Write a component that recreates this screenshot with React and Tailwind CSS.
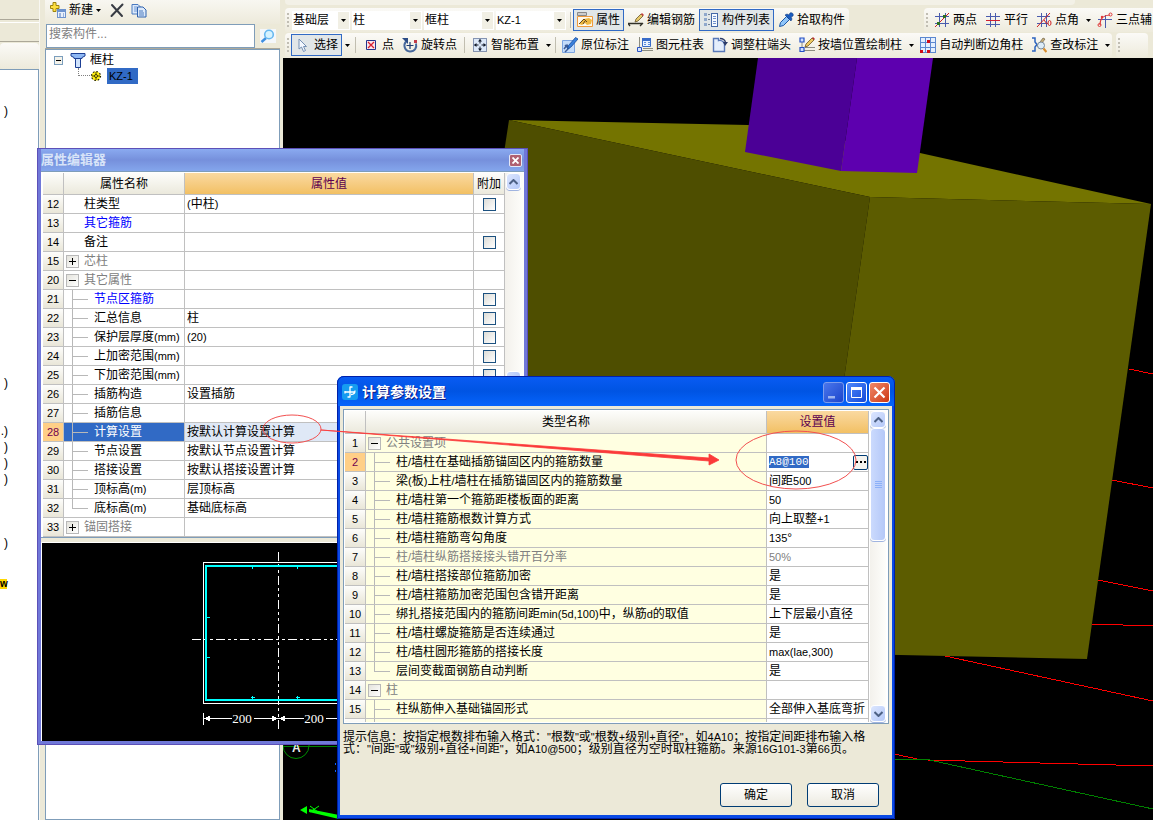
import React from "react";
import clsx from "clsx";

/* Latin runs are set one step smaller so they sit evenly beside the Chinese glyphs. */
function T({ children }) {
  return String(children)
    .split(/([\x20-\x7e]+)/)
    .filter(Boolean)
    .map((part, i) =>
      /^[\x20-\x7e]/.test(part) ? (
        <span key={i} className="text-[11px]">{part}</span>
      ) : (
        <React.Fragment key={i}>{part}</React.Fragment>
      )
    );
}

/* ---------- icons ---------- */

function Svg({ children, crisp }) {
  return (
    <svg viewBox="0 0 16 16" className="size-4 shrink-0" fill="none" aria-hidden="true" shapeRendering={crisp ? "crispEdges" : "auto"}>
      {children}
    </svg>
  );
}

const Icons = {
  create: (
    <Svg>
      <path d="M3 .5h3v3h3v3H6v3H3v-3H.5v-3H3z" fill="#ffe040" stroke="#9c8410" />
      <rect x="7.500" y="7.500" width="8" height="8" fill="#e8f0fc" stroke="#6d93cf" />
      <path d="M7.500 8h8v2h-8z" fill="#6d93cf" />
      <path d="M9 12h2m2 0h1M9 14h2m2 0h1" stroke="#4a74b8" />
    </Svg>
  ),
  remove: (
    <Svg>
      <path d="M3 3l10 11M13.500 2.500L2.500 14" stroke="#383c44" strokeWidth="2" strokeLinecap="round" />
    </Svg>
  ),
  copy: (
    <Svg>
      <path d="M1 2.500h6l3 3V12H1z" fill="#dce9fa" stroke="#4a7abf" />
      <path d="M3 5h3M3 7h4M3 9h4" stroke="#6d98d6" />
      <path d="M6.500 5h5.500l3 3v7H6.500z" fill="#dce9fa" stroke="#2f62ae" />
      <path d="M8 9h4M8 11h5M8 13h5" stroke="#4a7abf" />
    </Svg>
  ),
  search: (
    <Svg>
      <rect width="16" height="14" y="1" fill="#f4f7fb" />
      <path d="M6 10l-4.500 4" stroke="#3f8fe0" strokeWidth="2.400" />
      <circle cx="9" cy="6.500" r="4.300" fill="#d6f2ff" stroke="#68b8f0" strokeWidth="1.600" />
    </Svg>
  ),
  column: (
    <Svg>
      <path d="M1 1.500h14v2.500l-3 1.500v1H4v-1L1 4z" fill="#8fb8f4" stroke="#1c3f94" />
      <path d="M5.500 6.500h5v9h-5z" fill="#cfe2fc" stroke="#1c3f94" />
    </Svg>
  ),
  gear: (
    <svg viewBox="0 0 12 12" className="size-3 shrink-0" aria-hidden="true">
      <circle cx="6" cy="6" r="4.500" fill="#ffee10" stroke="#201c00" strokeWidth="1.200" strokeDasharray="1.600 1.900" />
      <path d="M6 2v8M2 6h8" stroke="#201c00" strokeWidth=".8" />
      <circle cx="6" cy="6" r="1.500" fill="#ffee10" stroke="#201c00" strokeWidth=".8" />
    </svg>
  ),
  property: (
    <Svg>
      <path d="M.5.500h9v3h-9z" fill="#ccc" stroke="#888" />
      <path d="M.5 4.500h15v10H.5z" fill="#fff8ea" stroke="#f09a3c" />
      <path d="M2 12c2-1 2-4 5-5l5-1 3 2-1 4-4 1-2-2-3 2z" fill="#f0b840" />
      <path d="M2 12l3-3 2-2 3 3M6 12l2-3" stroke="#604820" />
    </Svg>
  ),
  editRebar: (
    <Svg>
      <path d="M0 11.500h14M2 14l-2-2.500M12 14l3-3" stroke="#303028" strokeWidth="1.300" />
      <path d="M7 10l1-3 5-5 2 2-5 5z" fill="#e8c868" stroke="#66562c" strokeWidth=".8" />
      <path d="M13 2l1-1 2 2-1 1z" fill="#c83c3c" />
    </Svg>
  ),
  list: (
    <Svg crisp>
      <path d="M1 1h3v3H1zM1 6h3v3H1zM1 11h3v3H1z" fill="#90a8cc" />
      <path d="M5 2.500h2M5 7.500h2M5 12.500h2" stroke="#708098" />
      <path d="M8.500 1.500h6v13h-6z" fill="#f6faff" stroke="#4468a8" />
      <path d="M10 4.500h3M10 6.500h3M10 9.500h3M10 11.500h3" stroke="#6f8fcc" />
    </Svg>
  ),
  dropper: (
    <Svg>
      <path d="M1.500 14.500l1-4 6-6 3 3-6 6z" fill="#8fc4f8" stroke="#1c58a8" />
      <path d="M7 3l6 6 1-2-1-2 2-1c1-2-1-4-3-3l-1 2-2-1z" fill="#1a5cc0" stroke="#103a80" strokeWidth=".6" />
    </Svg>
  ),
  cursor: (
    <Svg>
      <path d="M4 2v10l2.500-2 2 4.500 2-1-2-4h3z" fill="#f4f8ff" stroke="#7590b4" strokeWidth="1" />
    </Svg>
  ),
  point: (
    <Svg>
      <path d="M3.500 3.500h9v9h-9z" fill="#fbe6ea" stroke="#24348c" />
      <path d="M5 5l6 6M11 5l-6 6" stroke="#d82030" strokeWidth="1.300" />
    </Svg>
  ),
  rotate: (
    <Svg>
      <path d="M4 4.500C1 8 2.500 14 8 14.500c5 0 7-4 6-8" stroke="#47689c" strokeWidth="2" />
      <path d="M0 1h6v6z" fill="#2c4c86" />
      <path d="M8 5v7M4.500 8.500h7" stroke="#203c70" strokeWidth="1.200" />
      <path d="M12 3h3v3h-3z" fill="#c03c48" />
    </Svg>
  ),
  smart: (
    <Svg>
      <path d="M1.500 1.500h13v13h-13z" fill="#dce8f8" stroke="#203870" strokeDasharray="1 1" />
      <path d="M8 2.500v4M8 9.500v4M2.500 8h4M9.500 8h4" stroke="#101828" />
      <path d="M8 2l2 2.500H6zM8 14l2-2.500H6zM2 8l2.500-2v4zM14 8l-2.500-2v4z" fill="#101828" />
    </Svg>
  ),
  annotate: (
    <Svg>
      <path d="M.5 3.500h12v12H.5z" fill="#c4dcfa" stroke="#7ca4e0" />
      <path d="M3 8l4 4M2 12l3-4 2 3-4 4" stroke="#3c5c98" strokeWidth="1.500" />
      <path d="M5.500 12l1-3.500 7-8L16 2l-7 8z" fill="#3a80dc" stroke="#164c9c" strokeWidth=".8" />
    </Svg>
  ),
  sheet: (
    <Svg>
      <path d="M2.500 0v11M5 13.500h11M6 11.500h10" stroke="#8c8c80" />
      <path d="M.5 10.500h4v4h-4z" fill="#d4e4fc" stroke="#2c54c4" />
      <path d="M5.500 1.500h8v8h-8z" fill="#e8f2ff" stroke="#3a6cc8" />
      <path d="M5 1h9v3H5z" fill="#3a6cc8" />
      <path d="M7 5.500h2m2 0h2M7 7.500h2m2 0h2" stroke="#5c8cdc" />
    </Svg>
  ),
  adjust: (
    <Svg>
      <path d="M1.500 1.500h5v2a5 5 0 016 6v5h-11z" fill="#e4eefc" stroke="#5878b8" strokeWidth="1.400" />
      <path d="M8 1.500c3 0 5 1.500 5.500 4" stroke="#2c3c68" strokeWidth="1.300" />
      <path d="M11 5h5l-3 4z" fill="#2c3c68" />
    </Svg>
  ),
  wallColumn: (
    <Svg>
      <path d="M3 2v12M5 13.500h11M6 10.500h10" stroke="#8c8c80" />
      <path d="M1 1h4v4H1zM1 10.500h4v4H1z" fill="#cfe0ff" stroke="#2450c4" strokeWidth="1.200" />
      <path d="M6 10l1-3 6-6 2 2-6 6z" fill="#ecc860" stroke="#6c5424" strokeWidth=".8" />
      <path d="M13 1l1-1 2 2-1 1z" fill="#b82c2c" />
    </Svg>
  ),
  autoCorner: (
    <Svg crisp>
      <path d="M0 0h16v16H0z" fill="#5c88d0" />
      <path d="M1 1h4v4H1zM6 1h4v4H6zM11 1h4v4h-4zM1 6h4v4H1zM6 6h4v4H6zM11 6h4v4h-4zM1 11h4v4H1zM6 11h4v4H6zM11 11h4v4h-4z" fill="#e4effe" />
      <path d="M7 3h3v3H7zM0 13h3v3H0zM7 13h3v3H7z" fill="#d00c18" />
    </Svg>
  ),
  review: (
    <Svg>
      <path d="M1 1h3v4l2 2.500L4 10v4H1" stroke="#2c64c0" strokeWidth="1.500" />
      <path d="M6 9l6-8 2 1-6 8z" fill="#c8b078" stroke="#605038" strokeWidth=".6" />
      <circle cx="10" cy="8.500" r="3.500" fill="#dcecf8" stroke="#788898" />
      <path d="M12.500 11.500l3 3.500" stroke="#d88c2c" strokeWidth="2.200" />
    </Svg>
  ),
  twoPoint: (
    <Svg>
      <path d="M5.500 1v14M11.500 1v14M1 4.500h14M1 11.500h14" stroke="#4a5cae" />
      <path d="M1 15L15 1" stroke="#d02020" />
      <path d="M9 3h3v3H9zM3 10h3v3H3z" fill="#2c7020" />
    </Svg>
  ),
  parallel: (
    <Svg>
      <path d="M5.500 1v14M10.500 1v14M1 4.500h14M1 12.500h14" stroke="#4a5cae" />
      <path d="M1 8.500h14" stroke="#d02030" />
    </Svg>
  ),
  pointAngle: (
    <Svg>
      <path d="M5.500 1v14M10.500 1v14M1 4.500h13M1 11.500h11" stroke="#4a5cae" />
      <path d="M1 15L14 1M8 8l3 4" stroke="#d02020" />
      <ellipse cx="13.500" cy="11" rx="1.500" ry="2.500" stroke="#d02020" />
    </Svg>
  ),
  threePoint: (
    <Svg>
      <path d="M8.500 3v13M1 7.500h14" stroke="#4a5cae" />
      <path d="M3 13C3 6 7 3 13 3" stroke="#e03838" strokeWidth="1.200" />
      <circle cx="2.500" cy="13" r="1.500" stroke="#e03838" />
      <circle cx="13.500" cy="2.500" r="1.500" stroke="#e03838" />
      <circle cx="5" cy="5" r="1.200" fill="#e03838" />
    </Svg>
  ),
};

function Caret() {
  return (
    <svg viewBox="0 0 5 3" className="h-[3px] w-[5px]" aria-hidden="true">
      <path d="M0 0h5L2.500 3z" fill="#000" />
    </svg>
  );
}

/* ---------- toolbars ---------- */

function Grip() {
  return (
    <span className="mx-0.5 flex flex-col gap-[2px]">
      {[0, 1, 2, 3].map((i) => (
        <span key={i} className="size-[2px] bg-[#c1beb3]" />
      ))}
    </span>
  );
}

function Sep({ wide }) {
  return <span className={clsx("h-4 w-px bg-[#c1beb0]", wide ? "mx-[3px]" : "mx-0.5")} />;
}

function Tool({ icon, label, active }) {
  return (
    <button
      type="button"
      className={clsx(
        "flex h-[22px] shrink-0 items-center gap-[3px] whitespace-nowrap border px-[3px]",
        active ? "border-[#316ac5] bg-[#e1e6e8]" : "border-transparent"
      )}
    >
      {Icons[icon]}
      {label}
    </button>
  );
}

function Drop({ label }) {
  return (
    <button type="button" aria-label={label} className="flex h-5 w-[10px] shrink-0 items-center justify-center">
      <Caret />
    </button>
  );
}

function Combo({ label, value, wide }) {
  return (
    <span className={clsx("relative mr-[2px] flex h-[19px] shrink-0 bg-white", wide ? "w-[70px]" : "w-[58px]")}>
      <select
        aria-label={label}
        className={clsx("w-full appearance-none bg-transparent pl-px leading-4 outline-none", value === "KZ-1" && "text-[11px]")}
      >
        <option>{value}</option>
      </select>
      <span className="pointer-events-none absolute inset-y-px right-px flex w-[11px] items-center justify-center bg-[#f1efe4]">
        <Caret />
      </span>
    </span>
  );
}

function Bar({ children, className }) {
  return (
    <div className={clsx("flex h-[25px] shrink-0 items-center rounded-sm bg-linear-to-b from-[#fbfaf7] to-[#edeadb]", className)}>
      {children}
    </div>
  );
}

function Toolbars() {
  return (
    <div className="flex shrink-0 flex-col bg-[#ece9d8] pl-0.5">
      <div className="h-[5px] w-[790px] max-w-full rounded-b-sm bg-[#f3f1e7]" />
      <div className="flex h-[27px] items-center overflow-hidden pt-[3px]">
        <Bar>
          <Grip />
          <span className="ml-px flex">
            <Combo label="楼层" value="基础层" />
            <Combo label="构件类别" value="柱" wide />
            <Combo label="构件类型" value="框柱" wide />
            <Combo label="构件名称" value="KZ-1" wide />
          </span>
          <Sep />
          <Tool icon="property" label="属性" active />
          <Tool icon="editRebar" label="编辑钢筋" />
          <Tool icon="list" label="构件列表" active />
          <Tool icon="dropper" label="拾取构件" />
        </Bar>
        <Bar className="ml-[75px]">
          <Grip />
          <Tool icon="twoPoint" label="两点" />
          <Tool icon="parallel" label="平行" />
          <Tool icon="pointAngle" label="点角" />
          <Drop label="点角选项" />
          <Tool icon="threePoint" label="三点辅" />
        </Bar>
      </div>
      <div className="flex h-[26px] items-center overflow-hidden">
        <Bar>
          <Grip />
          <Tool icon="cursor" label="选择" active />
          <Drop label="选择选项" />
          <Sep wide />
          <Tool icon="point" label="点" />
          <Tool icon="rotate" label="旋转点" />
          <Sep wide />
          <Tool icon="smart" label="智能布置" />
          <Drop label="智能布置选项" />
          <Sep />
          <Tool icon="annotate" label="原位标注" />
          <Tool icon="sheet" label="图元柱表" />
          <Tool icon="adjust" label="调整柱端头" />
          <Tool icon="wallColumn" label="按墙位置绘制柱" />
          <Drop label="绘制柱选项" />
          <Tool icon="autoCorner" label="自动判断边角柱" />
          <Tool icon="review" label="查改标注" />
          <Drop label="查改标注选项" />
        </Bar>
        <Bar className="ml-1 w-8">
          <Grip />
        </Bar>
      </div>
    </div>
  );
}

/* ---------- background panes ---------- */

const editorLines = {
  0: ")", 17: ")", 20: ".)", 21: ")", 22: ")", 23: ")", 27: ")",
};

function EditorStrip() {
  return (
    <aside className="flex w-10 shrink-0 flex-col border-r border-[#f8f7f2] bg-[#ece9d8]">
      <div className="h-5 border-b border-[#aca899]" />
      <div className="mt-0.5 h-5 border-b border-t border-b-[#aca899] border-t-white" />
      <div className="mt-px h-[26px] rounded-sm bg-linear-to-b from-[#fbfaf7] to-[#edeadb]" />
      <div className="flex flex-1 flex-col overflow-hidden border-r border-t border-[#7f9db9] bg-white pt-[33px]">
        {Array.from({ length: 28 }, (_, i) => (
          <p key={i} className="h-4 w-2 text-right leading-4">{editorLines[i]}</p>
        ))}
        <p className="mt-7 w-[7px] bg-[#ffd800] text-[10px] font-bold leading-[10px]">w</p>
      </div>
    </aside>
  );
}

function ComponentPane() {
  return (
    <aside className="flex w-[243px] shrink-0 flex-col bg-[#ece9d8] pl-[5px] pr-[3px]">
      <div className="flex h-6 items-center bg-linear-to-b from-[#f8f7f1] to-[#edeadb] pb-1 pl-[5px]">
        <button type="button" className="flex items-center gap-[3px]">
          {Icons.create}
          新建
        </button>
        <Drop label="新建选项" />
        <button type="button" aria-label="删除" className="ml-[6px]">{Icons.remove}</button>
        <button type="button" aria-label="复制" className="ml-[6px]">{Icons.copy}</button>
      </div>
      <div className="flex h-[25px] items-center border-b border-[#aca899] pl-px">
        <input
          aria-label="搜索构件"
          placeholder="搜索构件..."
          className="h-6 min-w-0 flex-1 border border-[#7f9db9] bg-white px-0.5 pb-1 outline-none placeholder:text-[#808080]"
        />
        <button type="button" aria-label="搜索" className="pl-[5px] pr-1">{Icons.search}</button>
      </div>
      <div className="flex-1 border border-[#7f9db9] bg-white pl-2 pt-0.5">
        <div className="flex h-4 items-center">
          <button type="button" aria-label="折叠" className="flex size-[9px] items-center justify-center border border-[#7b9ebd] bg-[#f4f2ea]">
            <span className="h-px w-[5px] bg-black" />
          </button>
          <span className="ml-[7px] mr-1 flex">{Icons.column}</span>
          框柱
        </div>
        <div className="flex h-4 items-center">
          <span className="ml-6 h-2 w-3 self-start border-b border-l border-dotted border-[#808080]" />
          {Icons.gear}
          <span className="ml-[5px] bg-[#316ac5] px-0.5 leading-4"><T>KZ-1</T>&nbsp;</span>
        </div>
      </div>
    </aside>
  );
}

function Model() {
  return (
    <svg viewBox="283 58 870 762" preserveAspectRatio="xMinYMin slice" className="min-h-0 w-full flex-1 bg-black" role="img" aria-label="三维模型">
      <g stroke="#ff0000" fill="none" shapeRendering="crispEdges">
        <path d="M1129 369l24 5M1112 480l41 8M1098 580l55 11M1092 624l61 2M945 656l208 45M880 751l42 9M927 760l226 6" />
      </g>
      <path d="M283 746.500h60M880 759h45l228 50" stroke="#008000" fill="none" shapeRendering="crispEdges" />
      <path d="M509 120l239 5 172 28 231 51-281-7z" fill="#747400" />
      <path d="M509 120l361 77-65 456-365-80z" fill="#4e4e00" />
      <path d="M870 197l281 7-64 455-282-6z" fill="#5c5c00" />
      <path d="M758 58h99l-16 113-96-19z" fill="#4b0096" />
      <path d="M857 58h76l-16 115-76-2z" fill="#5d00af" />
      <circle cx="296" cy="745.500" r="13" fill="none" stroke="#009000" />
      <text x="292" y="752" fontSize="12" fontWeight="bold" fill="#e8e8e8">A</text>
      <path d="M300 810l7-4v8zM309 809l30 6v4l-30-7z" fill="#00ff00" />
      <path d="M310 806l8 6m1-6l-9 6" stroke="#00ff00" />
      <path d="M335.500 763v2m0 5v2" stroke="#1060ff" />
    </svg>
  );
}

/* ---------- grid parts ---------- */

const cell = "h-[19px] overflow-hidden whitespace-nowrap border-b border-r border-[#c0c0c0] p-0";
const headGrey = "bg-linear-to-b from-[#fdfdfb] to-[#ebe9dc] font-normal";
const headGold = "bg-linear-to-b from-[#fad9a0] to-[#f2c063] font-normal text-[#5c0050]";

function Guide({ last }) {
  return (
    <span className="ml-2 mr-[6px] flex w-4 shrink-0 flex-col self-stretch">
      <span className="h-[10px] border-b border-l border-[#b8b8b8]" />
      {!last && <span className="flex-1 border-l border-[#b8b8b8]" />}
    </span>
  );
}

function Toggle({ open }) {
  return (
    <button
      type="button"
      aria-label={open ? "折叠" : "展开"}
      className="relative ml-0.5 mr-[5px] flex size-[13px] shrink-0 items-center justify-center border border-[#b8b8b8] bg-linear-to-br from-[#e4e3dc] to-white"
    >
      <span className="h-px w-[7px] bg-black" />
      {!open && <span className="absolute h-[7px] w-px bg-black" />}
    </button>
  );
}

function NameCell({ kind, text, tone }) {
  return (
    <div className={clsx("flex h-[18px] items-center leading-[18px]", tone)}>
      {(kind === "open" || kind === "closed") && <Toggle open={kind === "open"} />}
      {(kind === "child" || kind === "last") && <Guide last={kind === "last"} />}
      {kind === "plain" && <span className="w-5 shrink-0" />}
      <span><T>{text}</T></span>
    </div>
  );
}

function NumCell({ n, active }) {
  return (
    <th scope="row" className={clsx(cell, "text-center font-normal leading-[18px]", active ? "bg-[#ffcf87] text-[#700050]" : "bg-linear-to-b from-[#fdfdfb] to-[#e9e6d8]")}>
      <T>{n}</T>
    </th>
  );
}

function ScrollButton({ label, down }) {
  return (
    <button type="button" aria-label={label} className="flex h-[17px] w-full shrink-0 items-center justify-center rounded-sm border border-white bg-linear-to-br from-[#dce6fe] to-[#b4c8f8] shadow-[0_1px_0_#a0b4e0]">
      <svg viewBox="0 0 9 6" className="h-[6px] w-[9px]" aria-hidden="true">
        <path d={down ? "M.5 1l4 4 4-4" : "M.5 5l4-4 4 4"} fill="none" stroke="#4d6185" strokeWidth="2" />
      </svg>
    </button>
  );
}

/* ---------- property editor ---------- */

const properties = [
  { n: 12, kind: "plain", name: "柱类型", value: "(中柱)", box: true },
  { n: 13, kind: "plain", name: "其它箍筋", tone: "text-[#0000ff]" },
  { n: 14, kind: "plain", name: "备注", box: true },
  { n: 15, kind: "closed", name: "芯柱", tone: "text-[#808080]" },
  { n: 20, kind: "open", name: "其它属性", tone: "text-[#808080]" },
  { n: 21, kind: "child", name: "节点区箍筋", tone: "text-[#0000ff]", box: true },
  { n: 22, kind: "child", name: "汇总信息", value: "柱", box: true },
  { n: 23, kind: "child", name: "保护层厚度(mm)", value: "(20)", box: true },
  { n: 24, kind: "child", name: "上加密范围(mm)", box: true },
  { n: 25, kind: "child", name: "下加密范围(mm)", box: true },
  { n: 26, kind: "child", name: "插筋构造", value: "设置插筋" },
  { n: 27, kind: "child", name: "插筋信息" },
  { n: 28, kind: "child", name: "计算设置", value: "按默认计算设置计算", active: true },
  { n: 29, kind: "child", name: "节点设置", value: "按默认节点设置计算" },
  { n: 30, kind: "child", name: "搭接设置", value: "按默认搭接设置计算" },
  { n: 31, kind: "child", name: "顶标高(m)", value: "层顶标高" },
  { n: 32, kind: "last", name: "底标高(m)", value: "基础底标高" },
  { n: 33, kind: "closed", name: "锚固搭接", tone: "text-[#808080]" },
];

function SectionDrawing() {
  return (
    <svg viewBox="42 543 482 198" className="block w-full bg-black" role="img" aria-label="柱截面" shapeRendering="crispEdges">
      <g fill="none" stroke="#fff">
        <path d="M203.500 562.500h149v141h-149z" />
        <path d="M278.500 552v178M192 639.500h172" strokeDasharray="9 3 3 3 3 3" />
        <path d="M203.500 713v12M203 718.500h29M254 718.500h50M326 718.500h28" />
      </g>
      <path d="M206 566h145v134H206z" fill="none" stroke="#00ffff" strokeWidth="2" />
      <path d="M252.500 567v2m45-2v2M207 617.500h3m-3 40h3M252.500 696v3m-2-1.500h4m43-1.500v3m-2-1.500h4" stroke="#00ffff" />
      <path d="M204 718.500l6-3v6zM278 718.500l-6-3v6zM279 718.500l6-3v6z" fill="#fff" />
      <g fill="#fff" fontSize="13" textAnchor="middle" className="font-['Liberation_Serif',serif]">
        <text x="242" y="723">200</text>
        <text x="314" y="723">200</text>
      </g>
    </svg>
  );
}

function PropertyEditor() {
  return (
    <section aria-label="属性编辑器" className="absolute left-[37px] top-[148px] w-[491px] border-4 border-t border-[#7078d8] bg-[#ece9d8] outline-1 -outline-offset-1 outline-[#5c50b8]">
      <header className="flex h-[22px] items-center justify-between bg-linear-to-b from-[#8aaaf0] via-[#7690dc] to-[#84a6ec] pr-0.5">
        <h2 className="text-[13px] font-bold leading-5 text-[#d8e4f8]">属性编辑器</h2>
        <button type="button" aria-label="关闭" className="flex size-[13px] items-center justify-center rounded-xs border border-[#e4e8f8] bg-[#b06070]">
          <svg viewBox="0 0 7 7" className="size-[7px]" aria-hidden="true">
            <path d="M.5.500l6 6m0-6l-6 6" stroke="#fff" strokeWidth="1.800" />
          </svg>
        </button>
      </header>
      <div className="flex border-y border-[#7f9db9] bg-white pl-0.5 pt-px">
        <table className="w-0 flex-1 table-fixed border-separate border-spacing-0">
          <colgroup>
            <col className="w-[21px]" />
            <col className="w-[121px]" />
            <col />
            <col className="w-[31px]" />
          </colgroup>
          <thead>
            <tr className="h-[22px]">
              <th className={clsx(cell, headGrey)} aria-label="序号" />
              <th className={clsx(cell, headGrey)}>属性名称</th>
              <th className={clsx(cell, headGold)}>属性值</th>
              <th className={clsx(cell, headGrey)}>附加</th>
            </tr>
          </thead>
          <tbody>
            {properties.map((p) => (
              <tr key={p.n}>
                <NumCell n={p.n} active={p.active} />
                <td className={clsx(cell, p.active && "bg-[#316ac5] text-white")}>
                  <NameCell kind={p.kind} text={p.name} tone={p.tone} />
                </td>
                <td className={clsx(cell, "pl-0.5 leading-[18px]", p.active && "bg-[#dfe8f6]")}>
                  {p.value && <T>{p.value}</T>}
                </td>
                <td className={cell}>
                  {p.box && (
                    <input type="checkbox" aria-label={p.name + " 附加"} className="mx-auto block size-[13px] appearance-none border border-[#1c5180] bg-linear-to-br from-[#dcdcd7] to-white" />
                  )}
                </td>
              </tr>
            ))}
          </tbody>
        </table>
        <div className="flex w-[19px] flex-col bg-linear-to-r from-[#f3f1ec] to-[#fefefb] px-px pr-[3px]">
          <ScrollButton label="向上滚动" />
          <span className="h-[181px]" />
          <span className="h-20 rounded-sm border border-white bg-linear-to-r from-[#cbdafd] to-[#b4c8f8]" />
        </div>
      </div>
      <div className="pt-1">
        <div className="border-l border-t border-white">
          <SectionDrawing />
        </div>
      </div>
    </section>
  );
}

/* ---------- calculation settings dialog ---------- */

const settings = [
  { n: 1, kind: "open", name: "公共设置项", tone: "text-[#808080]" },
  { n: 2, kind: "child", name: "柱/墙柱在基础插筋锚固区内的箍筋数量", value: "A8@100", active: true },
  { n: 3, kind: "child", name: "梁(板)上柱/墙柱在插筋锚固区内的箍筋数量", value: "间距500" },
  { n: 4, kind: "child", name: "柱/墙柱第一个箍筋距楼板面的距离", value: "50" },
  { n: 5, kind: "child", name: "柱/墙柱箍筋根数计算方式", value: "向上取整+1" },
  { n: 6, kind: "child", name: "柱/墙柱箍筋弯勾角度", value: "135°" },
  { n: 7, kind: "child", name: "柱/墙柱纵筋搭接接头错开百分率", value: "50%", tone: "text-[#808080]" },
  { n: 8, kind: "child", name: "柱/墙柱搭接部位箍筋加密", value: "是" },
  { n: 9, kind: "child", name: "柱/墙柱箍筋加密范围包含错开距离", value: "是" },
  { n: 10, kind: "child", name: "绑扎搭接范围内的箍筋间距min(5d,100)中，纵筋d的取值", value: "上下层最小直径" },
  { n: 11, kind: "child", name: "柱/墙柱螺旋箍筋是否连续通过", value: "是" },
  { n: 12, kind: "child", name: "柱/墙柱圆形箍筋的搭接长度", value: "max(lae,300)" },
  { n: 13, kind: "last", name: "层间变截面钢筋自动判断", value: "是" },
  { n: 14, kind: "open", name: "柱", tone: "text-[#808080]" },
  { n: 15, kind: "child", name: "柱纵筋伸入基础锚固形式", value: "全部伸入基底弯折" },
  { n: "", kind: "child", name: "" },
];

function TitleButton({ label, className, children }) {
  return (
    <button type="button" aria-label={label} className={clsx("size-[21px] rounded-[3px] border", className)}>
      <svg viewBox="0 0 19 19" className="size-full" fill="none" aria-hidden="true">{children}</svg>
    </button>
  );
}

function SettingsDialog() {
  const push = "h-6 w-[72px] rounded-[3px] border border-[#003c74] bg-linear-to-b from-white to-[#eceae0]";
  return (
    <section role="dialog" aria-label="计算参数设置" className="absolute left-[337px] top-[376px] w-[558px] overflow-hidden rounded-t-[7px] bg-[#0a4ae4] px-[3px] pb-1 outline-1 -outline-offset-1 outline-[#0020a8]">
      <header className="-mx-[3px] flex h-[30px] items-center bg-linear-to-b from-[#0a5cf4] via-[#0054e3] to-[#0664fc] pl-[5px] pr-[5px] pt-0.5">
        <svg viewBox="0 0 16 16" className="size-4" aria-hidden="true">
          <rect width="16" height="16" rx="3" fill="#169cf0" />
          <path d="M8 2.500v11M3 8h10M3 7v2.500M8 3h2.500M8 13H5.500M13 6.500c0 3-2 4-4 4" stroke="#fff" strokeWidth="1.300" fill="none" />
        </svg>
        <h2 className="ml-1 flex-1 text-sm font-bold leading-5 text-white [text-shadow:1px_1px_#0a1883]">计算参数设置</h2>
        <div className="flex gap-0.5">
          <TitleButton label="最小化" className="border-[#7c9cec] bg-linear-to-br from-[#4a76ec] to-[#1c44cc]">
            <path d="M4 13h7v2.500H4z" fill="#9cb4f0" />
          </TitleButton>
          <TitleButton label="最大化" className="border-white bg-linear-to-br from-[#5088fc] to-[#1448d8]">
            <path d="M4.500 5h10v9.500h-10z" stroke="#fff" /><path d="M4 4h11v3H4z" fill="#fff" />
          </TitleButton>
          <TitleButton label="关闭" className="border-white bg-linear-to-br from-[#f08868] to-[#cc3408]">
            <path d="M4.500 4.500l10 10m0-10l-10 10" stroke="#fff" strokeWidth="2.200" />
          </TitleButton>
        </div>
      </header>
      <div className="bg-[#ece9d8] px-[3px] pb-2 pt-[3px]">
        <div className="flex h-[315px] overflow-hidden border border-[#7f9db9] bg-white pb-px pl-px pr-0.5 pt-px">
          <div className="flex-1 overflow-hidden">
            <table className="w-full table-fixed border-separate border-spacing-0">
              <colgroup>
                <col className="w-[21px]" />
                <col />
                <col className="w-[102px]" />
              </colgroup>
              <thead>
                <tr className="h-[23px]">
                  <th className={clsx(cell, headGrey)} aria-label="序号" />
                  <th className={clsx(cell, headGrey)}>类型名称</th>
                  <th className={clsx(cell, headGold)}>设置值</th>
                </tr>
              </thead>
              <tbody>
                {settings.map((s) => (
                  <tr key={s.n}>
                    <NumCell n={s.n} active={s.active} />
                    <td className={clsx(cell, "bg-[#ffffe1]")}>
                      <NameCell kind={s.kind} text={s.name} tone={s.tone} />
                    </td>
                    <td className={clsx(cell, "bg-white pl-0.5 leading-[18px]", s.tone)}>
                      {s.active ? (
                        <span className="flex h-[18px] items-center justify-between">
                          <input
                            aria-label={s.name}
                            defaultValue={s.value}
                            className="h-3 w-10 bg-[#316ac5] font-['Liberation_Mono',monospace] text-[11px] leading-3 text-white outline-none"
                          />
                          <button type="button" aria-label="更多" className="flex size-[15px] items-center justify-center gap-[2px] rounded-xs border border-[#003c74] bg-[#f4f3ee]">
                            <span className="size-[2px] bg-black" />
                            <span className="size-[2px] bg-black" />
                            <span className="size-[2px] bg-black" />
                          </button>
                        </span>
                      ) : (
                        s.value && <T>{s.value}</T>
                      )}
                    </td>
                  </tr>
                ))}
              </tbody>
            </table>
          </div>
          <div className="ml-px flex w-4 flex-col bg-linear-to-r from-[#f3f1ec] to-[#fefefb]">
            <ScrollButton label="向上滚动" />
            <span className="flex h-[113px] flex-col items-center justify-center gap-px rounded-sm border border-white bg-linear-to-r from-[#cbdafd] to-[#b4c8f8] shadow-[0_1px_0_#a0b4e0]">
              {[0, 1, 2, 3].map((i) => (
                <span key={i} className="h-px w-[7px] bg-[#8cb0f8]" />
              ))}
            </span>
            <span className="flex-1" />
            <ScrollButton label="向下滚动" down />
          </div>
        </div>
        <p className="mt-[7px] h-[52px] leading-3">
          <T>提示信息：按指定根数排布输入格式："根数"或"根数+级别+直径"，如4A10；按指定间距排布输入格</T>
          <br />
          <T>式："间距"或"级别+直径+间距"，如A10@500；级别直径为空时取柱箍筋。来源16G101-3第66页。</T>
        </p>
        <div className="flex justify-end gap-[15px] pr-[10px]">
          <button type="button" className={push}>确定</button>
          <button type="button" className={push}>取消</button>
        </div>
      </div>
    </section>
  );
}

/* Red call-out linking the selected property to the value it opens. */
function Callout() {
  return (
    <svg viewBox="260 410 600 84" className="pointer-events-none absolute left-[260px] top-[410px] h-[84px] w-[600px]" fill="none" aria-hidden="true">
      <ellipse cx="292" cy="429" rx="29" ry="14" stroke="#f25050" />
      <ellipse cx="796" cy="460" rx="60" ry="29" stroke="#f25050" />
      <path d="M321 430l388 28v-4l10 6-10 5v-4z" fill="#fb3a3a" stroke="#fb3a3a" strokeWidth=".8" />
    </svg>
  );
}

export default function App() {
  return (
    <div lang="zh-CN" className="relative flex h-screen overflow-hidden bg-[#ece9d8] font-['Liberation_Sans','Noto_Sans_CJK_SC',sans-serif] text-[12px] leading-4 text-black">
      <EditorStrip />
      <ComponentPane />
      <main className="flex min-w-0 flex-1 flex-col">
        <Toolbars />
        <Model />
      </main>
      <PropertyEditor />
      <SettingsDialog />
      <Callout />
    </div>
  );
}
